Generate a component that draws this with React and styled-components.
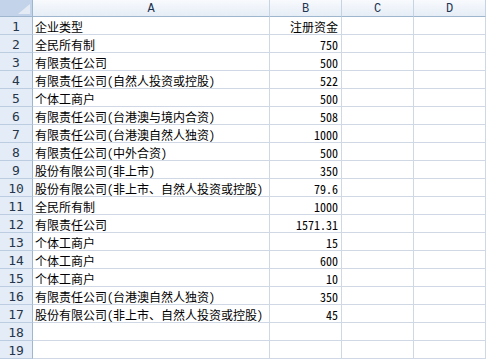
import { createGlobalStyle, styled } from "styled-components";

const GlobalStyle = createGlobalStyle`
  html, body {
    margin: 0;
    padding: 0;
    background: #ffffff;
  }
  body {
    font-family: "Noto Sans Mono CJK SC", "Noto Sans CJK SC", sans-serif;
    overflow: hidden;
  }
`;

const Sheet = styled.div`
  display: grid;
  grid-template-columns: 33px 237px 72px 72px 72px;
  grid-template-rows: 17px;
  grid-auto-rows: 18px;
  width: 486px;
`;

const Corner = styled.div`
  position: relative;
  box-sizing: border-box;
  background: #c3d4ea;
  border-right: 1px solid #9eb6ce;
  border-bottom: 1px solid #9eb6ce;

  &::after {
    content: "";
    position: absolute;
    right: 2px;
    bottom: 2px;
    width: 12px;
    height: 10px;
    background: #e4ebf5;
    clip-path: polygon(100% 0, 100% 100%, 0 100%);
  }
`;

const ColHeader = styled.div`
  box-sizing: border-box;
  display: flex;
  align-items: center;
  justify-content: center;
  padding-top: 2px;
  background: linear-gradient(#f8fafd, #e6edf6);
  border-right: 1px solid #c5d3e4;
  border-bottom: 1px solid #9eb6ce;
  color: #1f3552;
  font-family: "Liberation Mono", monospace;
  font-size: 12px;
`;

const RowHeader = styled.div`
  box-sizing: border-box;
  display: flex;
  align-items: center;
  justify-content: center;
  padding-top: 2px;
  background: #e4ecf7;
  border-right: 1px solid #9eb6ce;
  border-bottom: 1px solid #bccde2;
  color: #27364a;
  font-family: "DejaVu Sans Mono", monospace;
  font-size: 13px;
`;

const Cell = styled.div`
  box-sizing: border-box;
  display: flex;
  align-items: center;
  justify-content: ${({ $align }) => ($align === "right" ? "flex-end" : "flex-start")};
  padding: 1px 3px 0 2px;
  border-right: 1px solid #d0d7e5;
  border-bottom: 1px solid #d0d7e5;
  color: #000000;
  font-size: 12px;
  white-space: nowrap;
  overflow: hidden;
`;

const columns = ["A", "B", "C", "D"];

const rows = [
  ["企业类型", "注册资金"],
  ["全民所有制", "750"],
  ["有限责任公司", "500"],
  ["有限责任公司(自然人投资或控股)", "522"],
  ["个体工商户", "500"],
  ["有限责任公司(台港澳与境内合资)", "508"],
  ["有限责任公司(台港澳自然人独资)", "1000"],
  ["有限责任公司(中外合资)", "500"],
  ["股份有限公司(非上市)", "350"],
  ["股份有限公司(非上市、自然人投资或控股)", "79.6"],
  ["全民所有制", "1000"],
  ["有限责任公司", "1571.31"],
  ["个体工商户", "15"],
  ["个体工商户", "600"],
  ["个体工商户", "10"],
  ["有限责任公司(台港澳自然人独资)", "350"],
  ["股份有限公司(非上市、自然人投资或控股)", "45"],
  ["", ""],
  ["", ""],
];

export default function App() {
  return (
    <>
      <GlobalStyle />
      <Sheet>
        <Corner />
        {columns.map((col) => (
          <ColHeader key={col}>{col}</ColHeader>
        ))}
        {rows.map(([type, capital], i) => [
          <RowHeader key={`h${i}`}>{i + 1}</RowHeader>,
          <Cell key={`a${i}`}>{type}</Cell>,
          <Cell key={`b${i}`} $align="right">
            {capital}
          </Cell>,
          <Cell key={`c${i}`} />,
          <Cell key={`d${i}`} />,
        ])}
      </Sheet>
    </>
  );
}
